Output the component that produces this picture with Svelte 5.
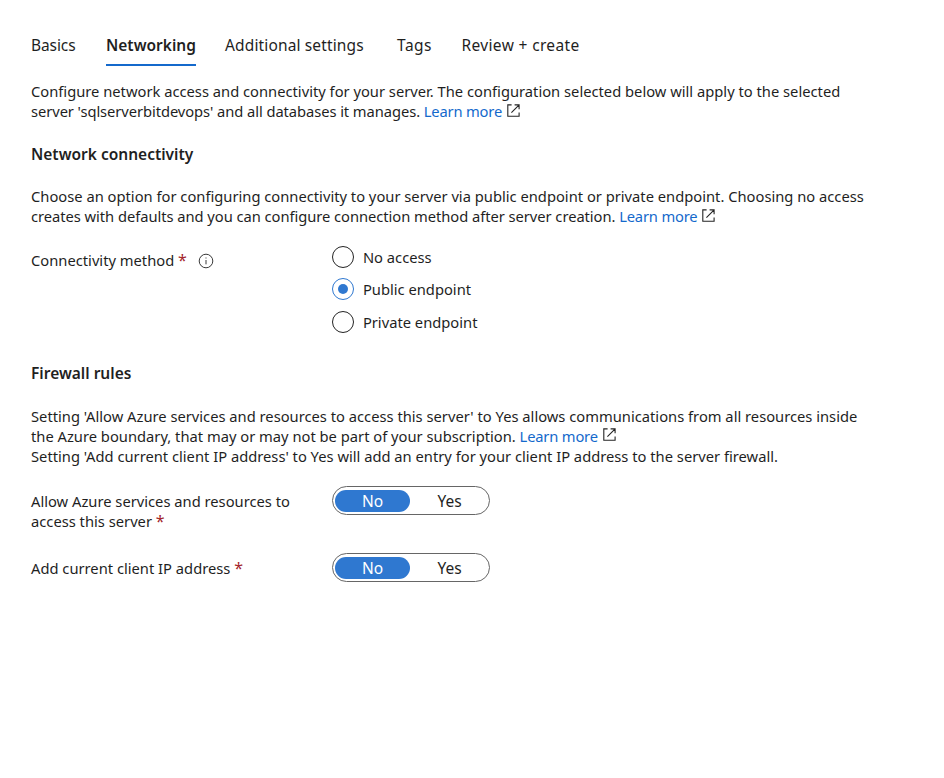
<script>
  const tabs = [
    { label: 'Basics', cls: 'basics' },
    { label: 'Networking', cls: 'networking active' },
    { label: 'Additional settings', cls: 'additional' },
    { label: 'Tags', cls: 'tags' },
    { label: 'Review + create', cls: 'review' }
  ];
  const methods = ['No access', 'Public endpoint', 'Private endpoint'];
  let method = $state('Public endpoint');
  let allow = $state('No');
  let addIp = $state('No');
</script>

{#snippet learnMore()}
  <a href="#learn">Learn more</a><svg class="ext" viewBox="0 0 13 13" aria-hidden="true"><path d="M4.6 0.9H0.8V12.2H12.1V8.5M7.6 0.9H12.1V5.2M11.9 1.1L4.4 8.6" /></svg>
{/snippet}

{#snippet toggle(value, set)}
  <div class="toggle">
    {#each ['No', 'Yes'] as option}
      <button class:on={value === option} onclick={() => set(option)}>{option}</button>
    {/each}
  </div>
{/snippet}

<main>
  <nav>
    {#each tabs as tab}
      <span class="tab {tab.cls}">{tab.label}</span>
    {/each}
  </nav>

  <p class="intro">
    <span class="line">Configure network access and connectivity for your server. The configuration selected below will apply to the selected</span>
    <span class="line databases">server 'sqlserverbitdevops' and all databases it manages. {@render learnMore()}</span>
  </p>

  <h2 class="nc">Network connectivity</h2>
  <p class="choose">
    <span class="line">Choose an option for configuring connectivity to your server via public endpoint or private endpoint. Choosing no access</span>
    <span class="line defaults">creates with defaults and you can configure connection method after server creation. {@render learnMore()}</span>
  </p>

  <div class="row method">
    <div class="label"><span>Connectivity method <b>*</b></span>
      <svg class="info" viewBox="0 0 16 16" aria-hidden="true"><circle cx="8" cy="8" r="6.8" /><path d="M8 7V11.3M8 4.5V5.5" /></svg>
    </div>
    <div class="radios">
      {#each methods as m}
        <button class="radio" class:checked={method === m} onclick={() => (method = m)}>
          <span class="ring"></span><span>{m}</span>
        </button>
      {/each}
    </div>
  </div>

  <h2 class="fr">Firewall rules</h2>
  <p class="rules">
    <span class="line">Setting 'Allow Azure services and resources to access this server' to Yes allows communications from all resources inside</span>
    <span class="line">the Azure boundary, that may or may not be part of your subscription. {@render learnMore()}</span>
    <span class="line">Setting 'Add current client IP address' to Yes will add an entry for your client IP address to the server firewall.</span>
  </p>

  <div class="row allow">
    <div class="label"><span class="line">Allow Azure services and resources to</span><span class="line">access this server <b>*</b></span></div>
    {@render toggle(allow, (v) => (allow = v))}
  </div>
  <div class="row ip">
    <div class="label"><span class="line">Add current client IP address <b>*</b></span></div>
    {@render toggle(addIp, (v) => (addIp = v))}
  </div>
</main>

<style>
  :global(body) { margin: 0; background: #fff; }
  main {
    box-sizing: border-box;
    height: 778px;
    padding: 35px 31px 0;
    overflow: hidden;
    font: 14.72px/20.4px "Noto Sans", "Open Sans", sans-serif;
    color: #1f1f1f;
  }
  nav { display: flex; height: 31px; font-size: 15.5px; white-space: nowrap; }
  .tab { box-sizing: border-box; height: 31px; }
  .basics { width: 45px; margin-right: 30px; letter-spacing: -0.1px; }
  .networking { width: 90px; margin-right: 29px; }
  .additional { width: 140px; margin-right: 32px; letter-spacing: 0.14px; }
  .tags { width: 35px; margin-right: 29.5px; letter-spacing: 0.5px; }
  .review { letter-spacing: 0.35px; }
  .active { font-weight: 600; border-bottom: 2px solid #1469cc; }
  p { margin: 0; }
  .line { display: block; white-space: nowrap; }
  .databases { letter-spacing: -0.07px; }
  .defaults { letter-spacing: -0.045px; }
  h2 { margin: 0; font-size: 15.5px; font-weight: 600; line-height: 21px; }
  .intro { margin-top: 15px; }
  .nc { margin-top: 22.2px; }
  .choose { margin-top: 20.6px; }
  a { color: #1469cc; text-decoration: none; letter-spacing: -0.18px; }
  svg { fill: none; stroke: #242424; }
  .ext { width: 13px; height: 13px; margin-left: 5px; stroke-width: 1.1; vertical-align: 0.5px; }
  .row { display: flex; }
  .label { width: 300.5px; flex: none; }
  b { color: #a4262c; font-weight: 400; font-size: 16px; line-height: 16px; }
  .method { margin-top: 19.6px; }
  .method .label { display: flex; align-items: center; height: 29px; }
  .info { width: 16px; height: 16px; margin-left: 11px; stroke-width: 0.9; }
  button { font: inherit; color: inherit; border: 0; background: none; padding: 0; margin: 0; }
  .radios { display: flex; flex-direction: column; gap: 10.4px; margin-left: 0.9px; }
  .radio { display: flex; align-items: center; height: 22px; text-align: left; white-space: nowrap; }
  .ring { box-sizing: border-box; width: 22px; height: 22px; border: 1.3px solid #242424; border-radius: 50%; margin-right: 8.5px; display: flex; align-items: center; justify-content: center; }
  .checked .ring { border-color: #2f78d0; }
  .checked .ring::after { content: ""; width: 10px; height: 10px; border-radius: 50%; background: #2f78d0; }
  .fr { margin-top: 30px; }
  .rules { margin-top: 21.8px; }
  .allow { margin-top: 19.5px; height: 67px; }
  .allow .label, .ip .label { padding-top: 4.3px; }
  .toggle { box-sizing: border-box; display: flex; width: 158.5px; height: 29px; padding: 2.5px; border: 1px solid #666; border-radius: 15px; }
  .toggle button { width: 75px; height: 22px; border-radius: 11px; font-size: 15.5px; line-height: 22px; }
  .toggle button + button { width: 79px; margin-right: -3px; }
  .toggle .on { background: #2f78d0; color: #fff; }
</style>
